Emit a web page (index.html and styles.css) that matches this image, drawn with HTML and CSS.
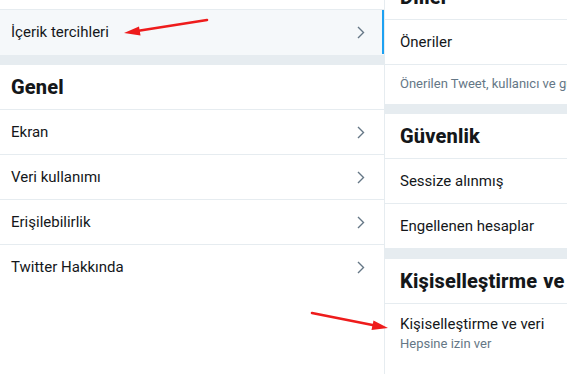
FILE: index.html
```html
<!DOCTYPE html>
<html lang="tr">
<head>
<meta charset="utf-8">
<title>Ayarlar</title>
<link rel="stylesheet" href="styles.css">
</head>
<body>
<div class="page">
  <div class="col left">
    <div class="stub"></div>
    <div class="item active"><span>İçerik tercihleri</span><svg class="chev" viewBox="0 0 8 13"><path d="M1 1l5.5 5.5L1 12"/></svg></div>
    <div class="gap"></div>
    <div class="heading">Genel</div>
    <div class="item"><span>Ekran</span><svg class="chev" viewBox="0 0 8 13"><path d="M1 1l5.5 5.5L1 12"/></svg></div>
    <div class="item"><span>Veri kullanımı</span><svg class="chev" viewBox="0 0 8 13"><path d="M1 1l5.5 5.5L1 12"/></svg></div>
    <div class="item"><span>Erişilebilirlik</span><svg class="chev" viewBox="0 0 8 13"><path d="M1 1l5.5 5.5L1 12"/></svg></div>
    <div class="item last"><span>Twitter Hakkında</span><svg class="chev" viewBox="0 0 8 13"><path d="M1 1l5.5 5.5L1 12"/></svg></div>
  </div>
  <div class="col right">
    <div class="scroll">
      <div class="heading">Diller</div>
      <div class="item">Öneriler</div>
      <div class="desc">Önerilen Tweet, kullanıcı ve gündemler için hangi dilleri görmek istediğini seç.</div>
      <div class="gap"></div>
      <div class="heading">Güvenlik</div>
      <div class="item">Sessize alınmış</div>
      <div class="item">Engellenen hesaplar</div>
      <div class="gap"></div>
      <div class="heading">Kişiselleştirme ve veri</div>
      <div class="row2">
        <div class="title">Kişiselleştirme ve veri</div>
        <div class="sub">Hepsine izin ver</div>
      </div>
    </div>
  </div>
  <svg class="arrows" width="567" height="374" viewBox="0 0 567 374">
    <line x1="207" y1="20" x2="137" y2="31" stroke="#ee1c1c" stroke-width="2.6" stroke-linecap="round"/>
    <polygon points="124,33 139,26.5 140.5,35.5" fill="#ee1c1c"/>
    <line x1="312" y1="313" x2="375" y2="325.5" stroke="#ee1c1c" stroke-width="2.6" stroke-linecap="round"/>
    <polygon points="388,328 373.5,320.5 371.5,330" fill="#ee1c1c"/>
  </svg>
</div>
</body>
</html>
```
FILE: styles.css
```css
html, body {
  margin: 0;
  padding: 0;
  background: #fff;
}
body {
  font-family: Roboto, "Liberation Sans", sans-serif;
  color: #14171a;
  font-size: 15px;
}
.page {
  position: relative;
  display: flex;
  width: 567px;
  height: 374px;
  overflow: hidden;
}
.col.left {
  width: 384px;
  flex: none;
  border-right: 1px solid #e6ecf0;
}
.col.right {
  flex: 1;
  min-width: 0;
  overflow: hidden;
}
.scroll {
  margin-top: -25px;
  width: 420px;
}
.stub {
  height: 9px;
  border-bottom: 1px solid #e6ecf0;
}
.item {
  height: 44px;
  border-bottom: 1px solid #e6ecf0;
  display: flex;
  align-items: center;
  justify-content: space-between;
  box-sizing: content-box;
  white-space: nowrap;
}
.left .item {
  padding: 0 19px 0 11px;
}
.right .item {
  padding: 0 15px;
}
.item.active {
  background: #f5f8fa;
  box-shadow: inset -2px 0 0 #1da1f2;
  border-bottom-color: #f5f8fa;
}
.item.last {
  border-bottom: none;
}
.chev {
  width: 8px;
  height: 13px;
  fill: none;
  stroke: #657786;
  stroke-width: 1.4;
}
.gap {
  height: 10px;
  background: #e6ecf0;
}
.heading {
  height: 44px;
  border-bottom: 1px solid #e6ecf0;
  display: flex;
  align-items: center;
  font-size: 20px;
  font-weight: 800;
  letter-spacing: 0.17px;
  word-spacing: 1px;
  white-space: nowrap;
}
.left .heading {
  padding: 0 11px;
}
.right .heading {
  padding: 0 15px;
}
.desc {
  padding: 10px 15px 11px;
  font-size: 13px;
  line-height: 18px;
  color: #657786;
  white-space: nowrap;
}
.row2 {
  padding: 10px 15px;
  white-space: nowrap;
}
.row2 .title {
  line-height: 20px;
}
.row2 .sub {
  font-size: 13px;
  line-height: 19px;
  color: #657786;
}
.arrows {
  position: absolute;
  left: 0;
  top: 0;
  pointer-events: none;
}
```
